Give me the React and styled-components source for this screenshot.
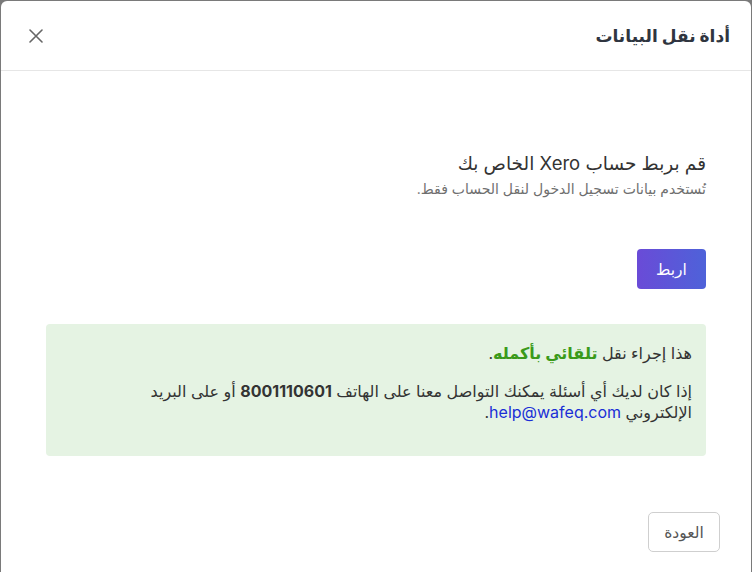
import React from 'react';
import styled, { createGlobalStyle } from 'styled-components';

const GlobalStyle = createGlobalStyle`
  html, body {
    margin: 0;
    padding: 0;
    background: #7a7a7a;
    font-family: Inter, "DejaVu Sans", sans-serif;
  }
`;

const Modal = styled.div`
  direction: rtl;
  margin: 1px 1px 0 1px;
  min-height: 571px;
  background: #fff;
  border-radius: 6px 6px 0 0;
  display: flex;
  flex-direction: column;
`;

const Header = styled.div`
  height: 69px;
  display: flex;
  align-items: center;
  justify-content: space-between;
  padding: 0 21px 0 26px;
  border-bottom: 1px solid #e6e6e6;
`;

const Title = styled.h1`
  margin: 0;
  font-size: 17px;
  font-weight: 700;
  color: #2f3540;
`;

const CloseButton = styled.button`
  border: none;
  background: none;
  padding: 0;
  width: 18px;
  height: 18px;
  display: flex;
  align-items: center;
  justify-content: center;
  cursor: pointer;
`;

const Body = styled.div`
  flex: 1;
  padding: 79px 45px 0 45px;
`;

const Heading = styled.h2`
  margin: 0;
  font-size: 18.5px;
  font-weight: 400;
  color: #333;
  line-height: 26px;
`;

const SubText = styled.p`
  margin: 2px 0 0;
  font-size: 14px;
  color: #6f6f6f;
  line-height: 22px;
`;

const PrimaryButton = styled.button`
  margin-top: 49px;
  width: 69px;
  height: 40px;
  border: none;
  border-radius: 4px;
  background: linear-gradient(to left, #4e62d9, #6a4bd7);
  color: #fff;
  font-family: inherit;
  font-size: 15.5px;
  cursor: pointer;
`;

const InfoBox = styled.div`
  margin-top: 35px;
  background: #e5f3e3;
  border-radius: 4px;
  padding: 19px 14px 33px 40px;
  font-size: 16px;
  color: #333;
  line-height: 21px;
`;

const Para = styled.p`
  margin: 0;
  & + & {
    margin-top: 17px;
  }
`;

const Green = styled.strong`
  color: #3a9a1a;
  font-weight: 700;
`;

const Phone = styled.strong`
  font-weight: 700;
  color: #333;
`;

const Mail = styled.a`
  color: #1a2fd6;
  text-decoration: none;
`;

const Footer = styled.div`
  display: flex;
  padding: 0 31px 20px;
`;

const SecondaryButton = styled.button`
  width: 72px;
  height: 40px;
  background: #fff;
  border: 1px solid #cfcfcf;
  border-radius: 5px;
  color: #555;
  font-family: inherit;
  font-size: 15.5px;
  cursor: pointer;
`;

export default function App() {
  return (
    <>
      <GlobalStyle />
      <Modal>
        <Header>
          <Title>أداة نقل البيانات</Title>
          <CloseButton aria-label="close">
            <svg width="14" height="14" viewBox="0 0 14 14">
              <path d="M1 1L13 13M13 1L1 13" stroke="#666" strokeWidth="1.6" strokeLinecap="round" />
            </svg>
          </CloseButton>
        </Header>
        <Body>
          <Heading>قم بربط حساب Xero الخاص بك</Heading>
          <SubText>تُستخدم بيانات تسجيل الدخول لنقل الحساب فقط.</SubText>
          <PrimaryButton>اربط</PrimaryButton>
          <InfoBox>
            <Para>
              هذا إجراء نقل <Green>تلقائي بأكمله</Green>.
            </Para>
            <Para>
              إذا كان لديك أي أسئلة يمكنك التواصل معنا على الهاتف <Phone>8001110601</Phone> أو على البريد
              الإلكتروني <Mail href="#">help@wafeq.com</Mail>.
            </Para>
          </InfoBox>
        </Body>
        <Footer>
          <SecondaryButton>العودة</SecondaryButton>
        </Footer>
      </Modal>
    </>
  );
}
